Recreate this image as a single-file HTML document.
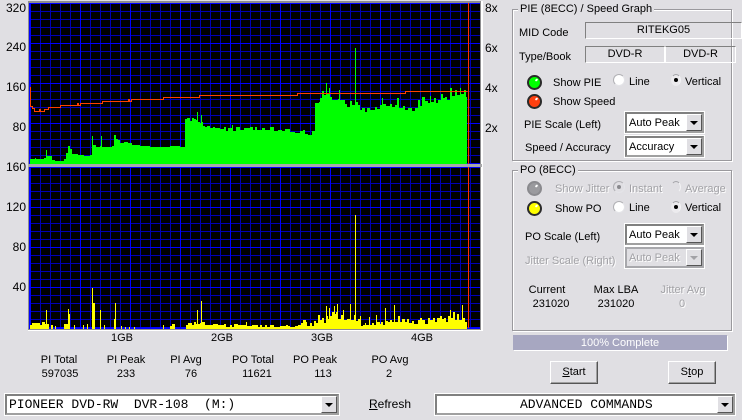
<!DOCTYPE html>
<html><head><meta charset="utf-8"><style>
html,body{margin:0;padding:0}
body{width:742px;height:420px;overflow:hidden;position:relative;background:#e0dfe3;font-family:"Liberation Sans",sans-serif;font-size:11px;color:#000}
.t{position:absolute;white-space:nowrap;line-height:14px;height:14px}
.c{text-align:center;width:100px}
.ax{font-size:12px;text-align:right;width:26px;left:0}
.d{color:#a2a2a6;text-shadow:1px 1px 0 #fff}
.g{position:absolute;border:1px solid #9a999d;box-shadow:1px 1px 0 #fff,inset 1px 1px 0 #fff}
.lg{position:absolute;background:#e0dfe3;padding:0 2px;line-height:13px;height:13px;white-space:nowrap}
.s{position:absolute;box-sizing:border-box;border:1px solid;border-color:#808080 #fff #fff #808080;text-align:center;line-height:14px}
.cb{position:absolute;box-sizing:border-box;background:#fff;border-top:2px solid #808080;border-left:2px solid #808080;border-right:2px solid #a0a0a0;border-bottom:2px solid #a0a0a0;outline:1px solid #fff;line-height:19px;padding-left:2px;white-space:pre;overflow:hidden}
.cb i{position:absolute;right:0;top:0;bottom:0;width:16px;background:#e0dfe3;border-left:1px solid #fff;border-top:1px solid #fff;border-right:1px solid #555;border-bottom:1px solid #555;box-sizing:border-box}
.cb i:after{content:"";position:absolute;left:3px;top:6px;border-left:4px solid transparent;border-right:4px solid transparent;border-top:4px solid #000}
.dis{background:#e0dfe3;color:#a2a2a6;border-color:#a8a8ac;text-shadow:1px 1px 0 #fff}
.dis i:after{border-top-color:#a2a2a6}
.mono{font-family:"Liberation Mono",monospace;font-size:13px;line-height:17px}
.r{position:absolute;width:12px;height:12px;box-sizing:border-box;border-radius:50%;background:#fff;border:1px solid #e4e4e8;border-left-color:#b0b0b4;border-top-color:#b0b0b4}
.v{position:absolute;width:10px;height:12px;box-sizing:border-box;border-radius:50%;background:#ecebee;border:1px solid transparent;border-top-color:#a8a8ac;border-right-color:#f4f4f6}
.v:after{content:"";position:absolute;left:2px;top:3px;width:4px;height:4px;border-radius:50%;background:#000}
.r.gd{background:#e0dfe3}
.r.gd:after{content:"";position:absolute;left:3px;top:3px;width:4px;height:4px;border-radius:50%;background:#8a8a8e}
.v.y{background:transparent}
.v.y:after{display:none}
.led{position:absolute;width:15px;height:15px;box-sizing:border-box;border-radius:50%;border:2px solid #2a2a2a}
.led:after{content:"";position:absolute;left:6px;top:2px;width:3px;height:2px;background:#fff;transform:rotate(-45deg);border-radius:1px}
.btn{position:absolute;box-sizing:border-box;background:#e0dfe3;border:1px solid;border-color:#fff #555 #555 #fff;box-shadow:inset -1px -1px 0 #a0a0a0;text-align:center;line-height:20px;font-size:11px}
</style></head><body>
<svg width="742" height="420" style="position:absolute;left:0;top:0" shape-rendering="crispEdges">
<defs>
<pattern id="th" patternUnits="userSpaceOnUse" x="30" y="3" width="10" height="8"><rect width="1" height="8" fill="#0000b4"/><rect width="10" height="1" fill="#0000b4"/></pattern>
<pattern id="tk1" patternUnits="userSpaceOnUse" x="30" y="3" width="50" height="40"><rect width="1" height="40" fill="#0000ff"/><rect width="50" height="1" fill="#0000ff"/></pattern>
<pattern id="th2" patternUnits="userSpaceOnUse" x="30" y="167" width="10" height="8"><rect width="1" height="8" fill="#0000b4"/><rect width="10" height="1" fill="#0000b4"/></pattern>
<pattern id="tk2" patternUnits="userSpaceOnUse" x="30" y="167" width="50" height="40"><rect width="1" height="40" fill="#0000ff"/><rect width="50" height="1" fill="#0000ff"/></pattern>
</defs>
<rect x="28" y="1" width="455" height="330" fill="#fff"/>
<rect x="28" y="1" width="453" height="329" fill="#8e8e90"/>
<rect x="29" y="3" width="451" height="161" fill="#000"/>
<rect x="30" y="3" width="450" height="161" fill="url(#th)"/>
<rect x="30" y="3" width="450" height="161" fill="url(#tk1)"/>
<rect x="29" y="3" width="2" height="161" fill="#0000ff"/>
<path fill="#00ff00" d="M30 164V159H35V158H36V159H44V158H46V150H47V156H52V160H55V161H64V159H66V153H68V146H70V149H72V154H78V155H84V156H90V155H92V136H93V145H96V147H100V146H101V136H102V147H112V146H114V135H116V139H118V140H120V143H124V142H128V143H132V145H140V146H150V147H170V146H180V147H185V119H187V118H190V121H192V118H194V119H196V120H197V112H198V122H200V123H201V115H202V122H203V126H205V127H207V126H210V128H213V127H215V128H220V129H224V127H226V131H228V128H232V125H233V131H236V127H240V130H244V128H250V127H253V130H255V127H257V130H262V128H265V130H270V127H274V131H278V130H282V131H285V129H290V132H295V133H300V131H303V130H305V134H308V135H312V131H315V103H319V102H320V98H322V91H324V95H326V83H327V94H329V88H330V97H332V100H335V100H338V99H339V90H340V100H345V104H347V107H350V101H352V105H355V48H356V102H358V105H360V110H362V108H365V112H367V108H370V110H375V107H377V109H380V105H382V98H383V104H386V106H390V104H392V107H395V105H397V98H399V108H403V106H405V110H408V108H412V111H415V108H418V100H420V106H422V97H425V101H428V103H430V96H431V102H434V98H436V103H438V100H441V94H443V98H445V97H447V100H450V88H452V96H455V90H457V95H460V88H461V94H464V90H466V97H467V164Z"/>
<path fill="none" stroke="#ff4000" stroke-width="1" d="M30.5 87V106.5H32.5V108.5H34.5V111.5H39.5V109.5H40.5V111.5H44.5V109.5H48.5V107.5H60.5V105.5H77.5V103.5H78.5V105.5H80.5V103.5H102.5V101.5H128.5V99.5H129.5V101.5H131.5V99.5H163.5V97.5H199.5V95.5H297.5V93.5H405.5V91.5H467.5"/>
<rect x="468" y="3" width="1" height="161" fill="#ff3000"/>
<rect x="28" y="164" width="454" height="3" fill="#a8a8aa"/>
<rect x="29" y="167" width="451" height="162" fill="#000"/>
<rect x="30" y="167" width="450" height="161" fill="url(#th2)"/>
<rect x="30" y="167" width="450" height="161" fill="url(#tk2)"/>
<rect x="29" y="167" width="2" height="161" fill="#0000ff"/>
<rect x="29" y="327" width="451" height="2" fill="#0000ff"/>
<path fill="#ffff00" d="M30 329V325H32V323H40V325H42V322H45V324H46V310H47V324H49V329H51V325H53V329H55V326H56V329H64V324H66V324H68V309H69V314H70V329H74V325H75V329H83V325H84V329H87V324H88V329H92V288H93V303H95V329H100V310H101V329H104V325H105V329H114V319H115V303H116V329H121V326H122V329H125V327H126V329H129V327H130V329H134V327H135V329H163V325H164V329H170V326H172V324H175V329H186V325H188V323H192V325H194V322H196V324H197V310H198V324H200V323H201V301H202V322H205V325H213V324H218V325H224V324H226V327H230V325H232V327H234V324H238V325H246V322H247V326H252V325H258V327H260V325H262V327H265V325H267V327H270V325H274V327H280V326H286V325H288V326H290V327H295V326H298V325H301V323H303V320H306V322H307V326H310V323H312V326H314V321H316V323H318V315H320V320H322V318H324V323H326V306H327V316H328V319H329V308H330V316H332V312H334V306H335V314H336V312H337V304H338V319H341V315H343V310H344V320H347V319H350V304H351V320H354V315H355V215H356V321H358V319H360V316H361V326H363V325H365V323H366V325H369V317H370V325H372V323H374V325H376V315H377V322H380V324H381V322H383V325H385V308H386V321H388V322H390V320H392V322H394V305H395V322H398V316H400V322H402V319H405V322H407V319H409V323H412V321H414V324H418V320H420V318H422V320H425V324H428V318H430V320H433V318H435V322H437V318H440V316H442V319H444V318H446V322H448V316H450V310H451V318H453V312H455V320H457V314H459V320H462V305H463V318H465V322H467V329Z"/>
<rect x="468" y="167" width="1" height="161" fill="#ff3000"/>
</svg>

<div class="t ax" style="top:1px">320</div>
<div class="t ax" style="top:40px">240</div>
<div class="t ax" style="top:80px">160</div>
<div class="t ax" style="top:120px">80</div>
<div class="t ax" style="top:160px">160</div>
<div class="t ax" style="top:200px">120</div>
<div class="t ax" style="top:240px">80</div>
<div class="t ax" style="top:280px">40</div>
<div class="t" style="left:485px;top:1px;font-size:12px">8x</div>
<div class="t" style="left:485px;top:41px;font-size:12px">6x</div>
<div class="t" style="left:485px;top:81px;font-size:12px">4x</div>
<div class="t" style="left:485px;top:121px;font-size:12px">2x</div>

<div class="t c" style="left:72px;top:331px">1GB</div>
<div class="t c" style="left:172px;top:331px">2GB</div>
<div class="t c" style="left:272px;top:331px">3GB</div>
<div class="t c" style="left:372px;top:331px">4GB</div>

<div class="t c" style="left:9px;top:353px">PI Total</div>
<div class="t c" style="left:76px;top:353px">PI Peak</div>
<div class="t c" style="left:136px;top:353px">PI Avg</div>
<div class="t c" style="left:203px;top:353px">PO Total</div>
<div class="t c" style="left:265px;top:353px">PO Peak</div>
<div class="t c" style="left:340px;top:353px">PO Avg</div>
<div class="t c" style="left:10px;top:367px">597035</div>
<div class="t c" style="left:76px;top:367px">233</div>
<div class="t c" style="left:141px;top:367px">76</div>
<div class="t c" style="left:207px;top:367px">11621</div>
<div class="t c" style="left:273px;top:367px">113</div>
<div class="t c" style="left:339px;top:367px">2</div>

<div class="g" style="left:512px;top:9px;width:218px;height:150px"></div>
<div class="lg" style="left:518px;top:3px">PIE (8ECC) / Speed Graph</div>
<div class="t" style="left:519px;top:26px">MID Code</div>
<div class="s" style="left:585px;top:22px;width:157px;height:17px">RITEKG05</div>
<div class="t" style="left:519px;top:50px">Type/Book</div>
<div class="s" style="left:585px;top:46px;width:80px;height:17px">DVD-R</div>
<div class="s" style="left:665px;top:46px;width:71px;height:17px;border-left-color:#fff;border-top-color:#808080">DVD-R</div>
<div class="led" style="left:527px;top:75px;background:#00ff00"></div>
<div class="t" style="left:553px;top:76px">Show PIE</div>
<div class="r" style="left:613px;top:74px"></div>
<div class="t" style="left:629px;top:75px">Line</div>
<div class="v" style="left:671px;top:74px"></div>
<div class="t" style="left:685px;top:75px">Vertical</div>
<div class="led" style="left:527px;top:94px;background:#ff4010"></div>
<div class="t" style="left:553px;top:95px">Show Speed</div>
<div class="t" style="left:524px;top:118px">PIE Scale (Left)</div>
<div class="cb" style="left:625px;top:112px;width:79px;height:21px">Auto Peak<i></i></div>
<div class="t" style="left:525px;top:141px">Speed / Accuracy</div>
<div class="cb" style="left:625px;top:136px;width:79px;height:21px">Accuracy<i></i></div>

<div class="g" style="left:512px;top:170px;width:218px;height:159px"></div>
<div class="lg" style="left:518px;top:164px">PO (8ECC)</div>
<div class="led" style="left:527px;top:181px;background:#9a9a9e;border-color:#8a8a8e"></div>
<div class="t d" style="left:555px;top:182px">Show Jitter</div>
<div class="r gd" style="left:613px;top:181px"></div>
<div class="t d" style="left:629px;top:182px">Instant</div>
<div class="v y" style="left:671px;top:181px"></div>
<div class="t d" style="left:685px;top:182px">Average</div>
<div class="led" style="left:527px;top:201px;background:#ffff00"></div>
<div class="t" style="left:555px;top:202px">Show PO</div>
<div class="r" style="left:613px;top:201px"></div>
<div class="t" style="left:629px;top:201px">Line</div>
<div class="v" style="left:671px;top:201px"></div>
<div class="t" style="left:685px;top:201px">Vertical</div>
<div class="t" style="left:525px;top:230px">PO Scale (Left)</div>
<div class="cb" style="left:625px;top:224px;width:79px;height:21px">Auto Peak<i></i></div>
<div class="t d" style="left:525px;top:254px">Jitter Scale (Right)</div>
<div class="cb dis" style="left:625px;top:247px;width:79px;height:21px">Auto Peak<i></i></div>
<div class="t c" style="left:497px;top:283px">Current</div>
<div class="t c" style="left:566px;top:283px">Max LBA</div>
<div class="t c d" style="left:633px;top:283px">Jitter Avg</div>
<div class="t c" style="left:501px;top:297px">231020</div>
<div class="t c" style="left:566px;top:297px">231020</div>
<div class="t c d" style="left:632px;top:297px">0</div>

<div style="position:absolute;left:513px;top:335px;width:214px;height:15px;background:#a7a7c1;color:#fff;text-align:center;line-height:16px;box-shadow:1px 1px 0 #fff;font-size:11px">100% Complete</div>
<div class="btn" style="left:550px;top:361px;width:48px;height:23px"><u>S</u>tart</div>
<div class="btn" style="left:668px;top:361px;width:48px;height:23px">S<u>t</u>op</div>

<div class="cb mono" style="left:5px;top:394px;width:334px;height:21px">PIONEER DVD-RW  DVR-108  (M:)<i></i></div>
<div class="t" style="left:369px;top:397px;font-size:12px"><u>R</u>efresh</div>
<div class="cb mono" style="left:435px;top:394px;width:300px;height:21px;padding-left:83px">ADVANCED COMMANDS<i></i></div>
</body></html>
